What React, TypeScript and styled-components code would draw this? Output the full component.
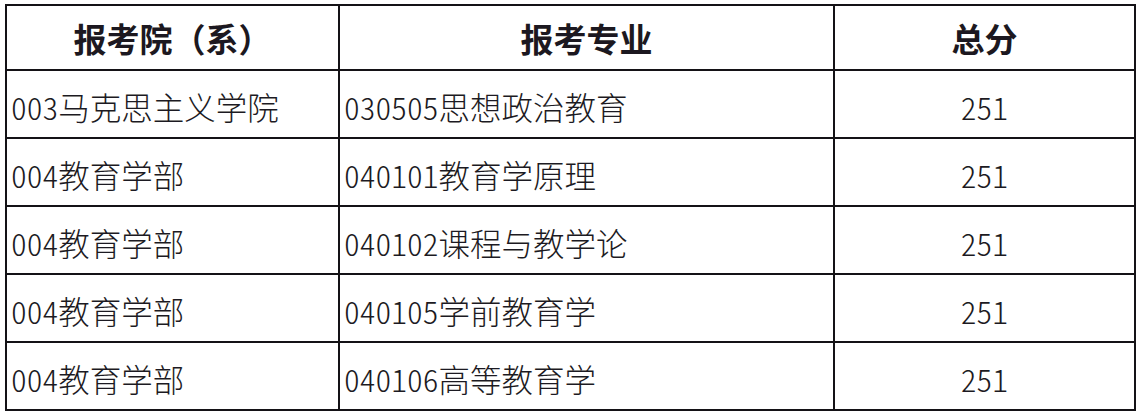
import React from "react";
import styled, { createGlobalStyle } from "styled-components";

const GlobalStyle = createGlobalStyle`
  html, body {
    margin: 0;
    padding: 0;
    background: #ffffff;
  }
  body {
    font-family: "Noto Sans CJK SC", "Noto Sans", sans-serif;
  }
`;

const Page = styled.div`
  width: 1142px;
  height: 418px;
  padding: 4px 0 0 5px;
  box-sizing: border-box;
  background: #ffffff;
`;

const Grid = styled.div`
  display: grid;
  grid-template-columns: 331px 493px 299px;
  grid-template-rows: 63px repeat(5, 66px);
  gap: 2px;
  padding: 2px;
  width: 1131px;
  box-sizing: border-box;
  background: #141216;
`;

const HeaderCell = styled.div`
  background: #ffffff;
  display: flex;
  align-items: center;
  justify-content: center;
  font-size: 33px;
  font-weight: 700;
  color: #1c1820;
  padding-top: 1px;
  white-space: nowrap;
`;

const Cell = styled.div<{ $center?: boolean }>`
  background: #ffffff;
  display: flex;
  align-items: center;
  justify-content: ${(p) => (p.$center ? "center" : "flex-start")};
  padding-left: ${(p) => (p.$center ? "0" : "4px")};
  padding-top: 3px;
  font-size: 31.5px;
  font-weight: 300;
  color: #1c1a22;
  font-feature-settings: "hwid" 1;
  white-space: nowrap;
`;

const rows = [
  ["003马克思主义学院", "030505思想政治教育", "251"],
  ["004教育学部", "040101教育学原理", "251"],
  ["004教育学部", "040102课程与教学论", "251"],
  ["004教育学部", "040105学前教育学", "251"],
  ["004教育学部", "040106高等教育学", "251"],
];

export default function App() {
  return (
    <>
      <GlobalStyle />
      <Page>
        <Grid>
          <HeaderCell>报考院（系）</HeaderCell>
          <HeaderCell>报考专业</HeaderCell>
          <HeaderCell>总分</HeaderCell>
          {rows.map((r, i) => (
            <React.Fragment key={i}>
              <Cell>{r[0]}</Cell>
              <Cell>{r[1]}</Cell>
              <Cell $center>{r[2]}</Cell>
            </React.Fragment>
          ))}
        </Grid>
      </Page>
    </>
  );
}
